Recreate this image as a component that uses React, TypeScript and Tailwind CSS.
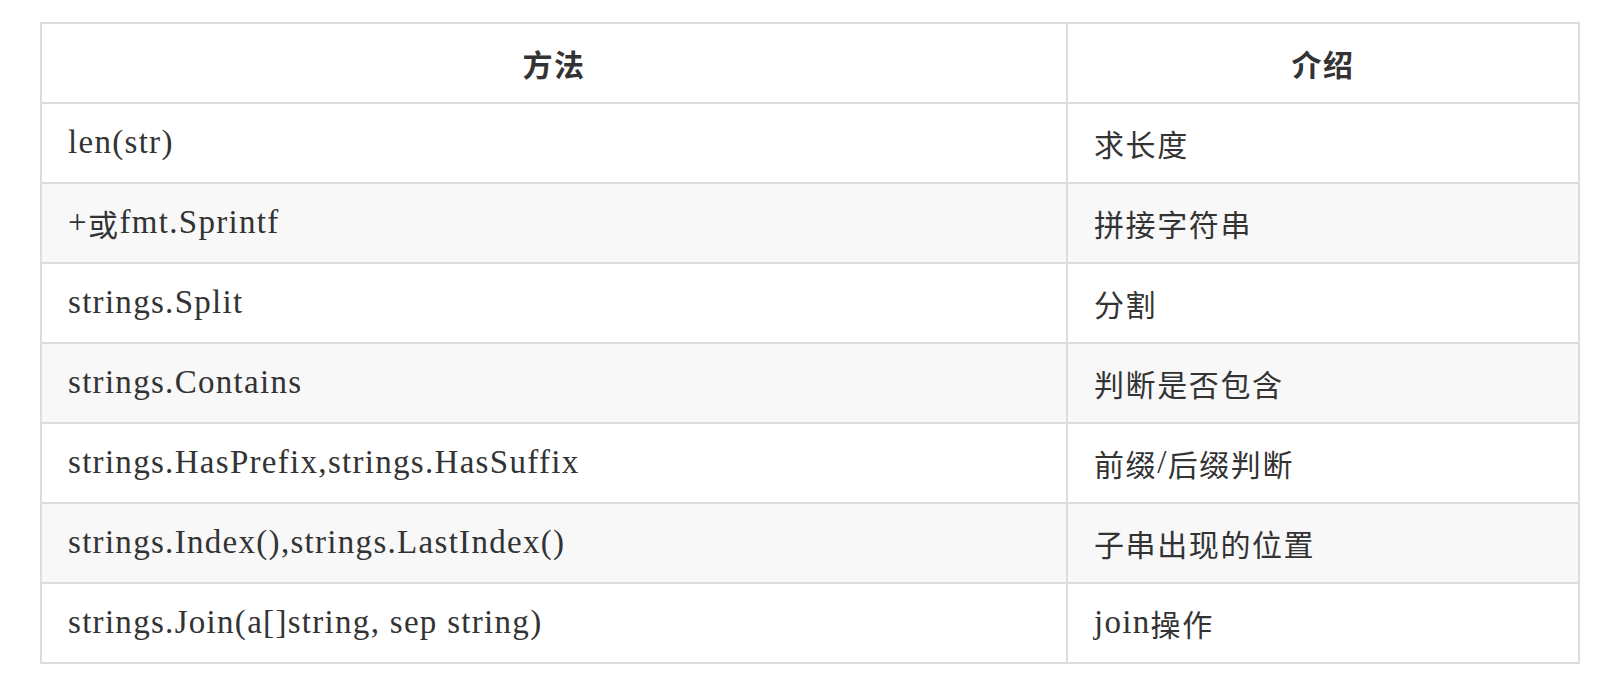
import React from 'react';

// Markdown-style comparison table: Go string helpers and what they do.

const rows: [string, string][] = [
  ['len(str)', '求长度'],
  ['+或fmt.Sprintf', '拼接字符串'],
  ['strings.Split', '分割'],
  ['strings.Contains', '判断是否包含'],
  ['strings.HasPrefix,strings.HasSuffix', '前缀/后缀判断'],
  ['strings.Index(),strings.LastIndex()', '子串出现的位置'],
  ['strings.Join(a[]string, sep string)', 'join操作'],
];

// split text so CJK runs get their own size and spacing
function Mixed({ text }: { text: string }) {
  const parts = text.split(/([\u3400-\u9fff]+)/).filter(Boolean);
  return (
    <>
      {parts.map((p, i) =>
        /[\u3400-\u9fff]/.test(p) ? (
          <span key={i} className="text-[30px] tracking-[1.6px] font-['Noto_Sans_CJK_SC',sans-serif]">
            {p}
          </span>
        ) : (
          <span key={i} className="tracking-[1.3px]">
            {p}
          </span>
        )
      )}
    </>
  );
}

export default function App() {
  return (
    <main className="min-h-screen bg-white pl-[40px] pt-[22px] font-['Liberation_Serif','Noto_Sans_CJK_SC',serif] text-[33px] text-[#333]">
      <div className="grid w-[1540px] grid-cols-[1026px_512px] border-l-2 border-t-2 border-[#ddd]">
        <div className="flex h-[80px] items-center justify-center border-b-2 border-r-2 border-[#ddd] font-semibold">
          <Mixed text="方法" />
        </div>
        <div className="flex h-[80px] items-center justify-center border-b-2 border-r-2 border-[#ddd] font-semibold">
          <Mixed text="介绍" />
        </div>
        {rows.map(([method, desc], i) => {
          const bg = i % 2 === 1 ? 'bg-[#f8f8f8]' : 'bg-white';
          return (
            <React.Fragment key={method}>
              <div className={`flex h-[80px] items-center border-b-2 border-r-2 border-[#ddd] pl-[26px] ${bg}`}>
                <Mixed text={method} />
              </div>
              <div className={`flex h-[80px] items-center border-b-2 border-r-2 border-[#ddd] pl-[26px] ${bg}`}>
                <Mixed text={desc} />
              </div>
            </React.Fragment>
          );
        })}
      </div>
    </main>
  );
}
